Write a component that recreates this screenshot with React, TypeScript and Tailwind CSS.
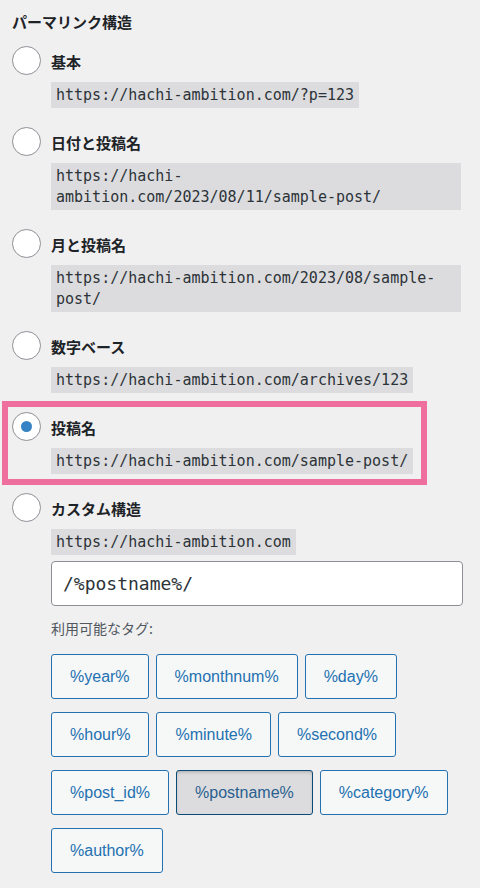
import React from "react";

const jp = "font-['Noto_Sans_CJK_JP','Noto_Sans',sans-serif]";
const mono = "font-['DejaVu_Sans_Mono',monospace]";

type Option = {
  label: string;
  url: string;
  checked?: boolean;
};

const options: Option[] = [
  { label: "基本", url: "https://hachi-ambition.com/?p=123" },
  { label: "日付と投稿名", url: "https://hachi-ambition.com/2023/08/11/sample-post/" },
  { label: "月と投稿名", url: "https://hachi-ambition.com/2023/08/sample-post/" },
  { label: "数字ベース", url: "https://hachi-ambition.com/archives/123" },
  { label: "投稿名", url: "https://hachi-ambition.com/sample-post/", checked: true },
];

const tags = [
  "%year%",
  "%monthnum%",
  "%day%",
  "%hour%",
  "%minute%",
  "%second%",
  "%post_id%",
  "%postname%",
  "%category%",
  "%author%",
];

function Radio({ checked }: { checked?: boolean }) {
  return (
    <span className="w-[29px] h-[29px] shrink-0 rounded-full border border-[#8c8f94] bg-white flex items-center justify-center">
      {checked && <span className="w-[11px] h-[11px] rounded-full bg-[#3582c4]" />}
    </span>
  );
}

function Code({ children }: { children: React.ReactNode }) {
  return (
    <div className="pl-[39px] pr-[2px] mt-[7px]">
      <code
        className={`${mono} block w-fit max-w-full bg-[#dcdcde] text-[#2c3338] text-[15px] leading-[21px] px-[5px] py-[2.5px] break-words`}
      >
        {children}
      </code>
    </div>
  );
}

export default function App() {
  return (
    <div className="min-h-screen w-full bg-[#f0f0f1] pl-[12px] pr-[17px] pt-[12px] pb-[20px]">
      <h2 className={`${jp} text-[15px] leading-[20px] font-bold text-[#1d2327]`}>
        パーマリンク構造
      </h2>

      <div className="mt-[14px] flex flex-col gap-[19px]">
        {options.map((o) => (
          <div key={o.label} className="relative">
            {o.checked && (
              <div className="absolute left-[-10px] top-[-11px] w-[425px] h-[84px] border-[6px] border-[#ee6f9e]" />
            )}
            <label className="flex items-center gap-[10px] h-[29px]">
              <Radio checked={o.checked} />
              <span className={`${jp} text-[15px] leading-[22px] font-bold text-[#1d2327] pt-[2px]`}>
                {o.label}
              </span>
            </label>
            <Code>{o.url}</Code>
          </div>
        ))}

        <div>
          <label className="flex items-center gap-[10px] h-[29px]">
            <Radio />
            <span className={`${jp} text-[15px] leading-[22px] font-bold text-[#1d2327] pt-[2px]`}>
              カスタム構造
            </span>
          </label>
          <Code>https://hachi-ambition.com</Code>
          <div className="pl-[39px] mt-[6px]">
            <input
              readOnly
              value="/%postname%/"
              className={`${mono} block w-full h-[45px] rounded-[4px] border border-[#8c8f94] bg-white px-[11px] text-[18px] text-[#2c3338] outline-none`}
            />
            <p className={`${jp} mt-[12px] text-[14px] leading-[20px] text-[#50575e]`}>
              利用可能なタグ:
            </p>
            <div className="mt-[16px] flex flex-wrap gap-x-[7px] gap-y-[13px]">
              {tags.map((t) => {
                const active = t === "%postname%";
                return (
                  <button
                    key={t}
                    className={
                      active
                        ? "h-[45px] px-[18px] rounded-[3px] border border-[#0a4b78] bg-[#dcdcde] text-[#2a5f8f] text-[16px] font-['Liberation_Sans',Arial,sans-serif] shadow-[inset_0_2px_5px_-3px_rgba(0,0,0,0.5)]"
                        : "h-[45px] px-[18px] rounded-[3px] border border-[#2271b1] bg-[#f6f7f7] text-[#2271b1] text-[16px] font-['Liberation_Sans',Arial,sans-serif]"
                    }
                  >
                    {t}
                  </button>
                );
              })}
            </div>
          </div>
        </div>
      </div>
    </div>
  );
}
